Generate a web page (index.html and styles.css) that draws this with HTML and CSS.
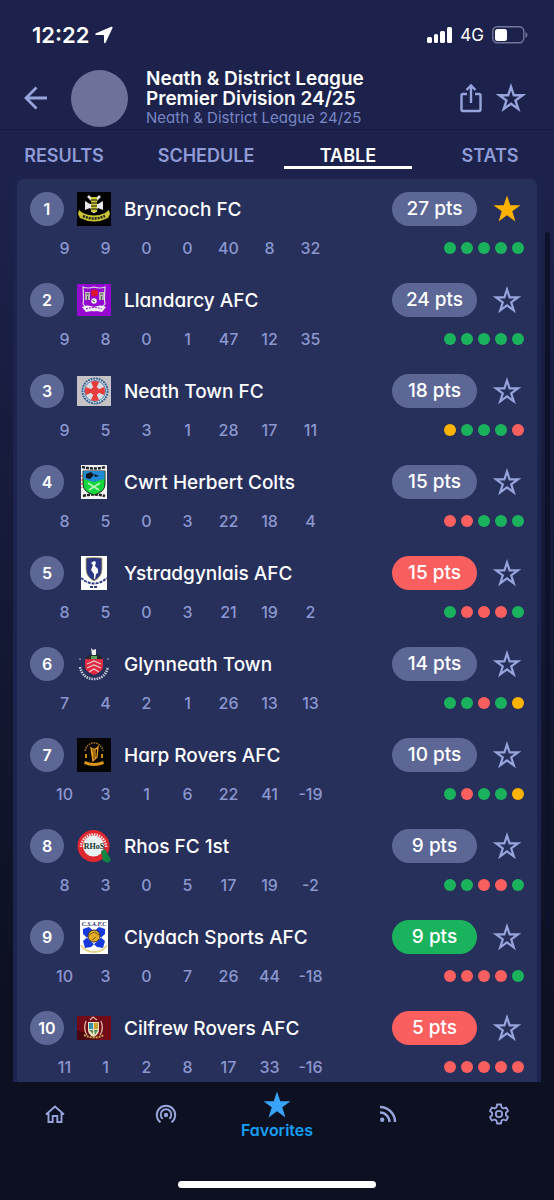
FILE: index.html
```html
<!DOCTYPE html>
<html lang="en">
<head>
  <meta charset="UTF-8">
  <meta name="viewport" content="width=device-width, initial-scale=1">
  <title>Neath &amp; District League - Table</title>
  <link rel="stylesheet" href="styles.css">
</head>
<body>
  <!-- shared icons -->
  <svg class="sprite" aria-hidden="true">
    <symbol id="star-line" viewBox="0 0 28 28">
      <path d="M14 3.500l2.600 7.900h8.300l-6.700 4.900 2.600 8-6.800-4.900-6.800 4.900 2.600-8-6.700-4.900h8.300z" fill="none" stroke="currentColor" stroke-width="2.200"/>
    </symbol>
    <symbol id="star-fill" viewBox="0 0 28 28">
      <path d="M14 .5l3.300 9.700h10.200l-8.200 6.100 3.100 10.200L14 20.300l-8.400 6.200 3.100-10.200L.5 10.200h10.200z" fill="currentColor"/>
    </symbol>
  </svg>

  <div class="app">
    <div class="status-bar">
      <span class="time">12:22</span>
      <svg class="location" width="18" height="18" viewBox="0 0 18 18"><path d="M16.200.8L1 7.300c-1.200.5-.9 1.700.3 1.700H8.300c.5 0 .7.200.7.700v6.600c0 1.200 1.200 1.500 1.700.3L17.500 2c.4-.9-.4-1.600-1.300-1.200z" fill="#fff"/></svg>
      <svg class="signal" width="25" height="16" viewBox="0 0 25 16" fill="#fff"><rect x="0" y="10" width="5" height="6" rx="1.500"/><rect x="7" y="7" width="4" height="9" rx="1.500"/><rect x="13" y="4" width="5" height="12" rx="1.500"/><rect x="20" y="0" width="5" height="16" rx="1.500"/></svg>
      <span class="network">4G</span>
      <svg width="36" height="18" viewBox="0 0 36 18"><rect x=".8" y=".8" width="31" height="16" rx="4.500" fill="none" stroke="#73779a" stroke-width="1.400"/><rect x="3" y="3" width="12" height="12" rx="2.500" fill="#fff"/><path d="M33.500 6v6q2-1 2-3t-2-3z" fill="#73779a"/></svg>
    </div>

    <header class="header">
      <button class="icon-btn back" aria-label="Back">
        <svg width="24" height="24" viewBox="0 0 24 24" fill="none" stroke="currentColor" stroke-width="2.800"><path d="M23 12H2M12.500 1.500L2 12l10.500 10.500"/></svg>
      </button>
      <div class="avatar"></div>
      <div class="heading">
        <h1>Neath &amp; District League Premier Division 24/25</h1>
        <p>Neath &amp; District League 24/25</p>
      </div>
      <button class="icon-btn" aria-label="Share">
        <svg width="24" height="30" viewBox="0 0 24 30" fill="none" stroke="currentColor" stroke-width="2.400"><path d="M8 11H4Q2.500 11 2.500 12.500v14Q2.500 28 4 28h16q1.500 0 1.500-1.500v-14Q21.500 11 20 11H16M12 20V3M7.500 7L12 2.500 16.500 7"/></svg>
      </button>
      <button class="icon-btn" aria-label="Add to favorites">
        <svg width="30" height="30"><use href="#star-line"/></svg>
      </button>
    </header>

    <nav class="tabs">
      <a href="#results">RESULTS</a>
      <a href="#schedule">SCHEDULE</a>
      <a href="#table" class="active">TABLE</a>
      <a href="#stats">STATS</a>
    </nav>

    <main class="content">
      <div class="panel">
        <div class="card">
          <table class="standings" id="standings"></table>
        </div>
      </div>
      <div class="scroll-thumb"></div>
    </main>

    <footer class="bottom">
      <nav class="bottom-nav">
        <a href="#home" aria-label="Home"><svg width="20" height="18" viewBox="0 0 20 18" fill="none" stroke="currentColor" stroke-width="1.900"><path d="M1 9.500l9-8 9 8M3.500 8v9h4.200v-6h4.600v6h4.200V8"/></svg></a>
        <a href="#live" aria-label="Live"><svg width="22" height="20" viewBox="0 0 22 20" fill="none" stroke="currentColor" stroke-width="1.900"><path d="M5.500 18.300a9.200 9.200 0 1 1 11 0M7.800 14.800a5.300 5.300 0 1 1 6.400 0"/><circle cx="11" cy="11" r="2.200" fill="currentColor" stroke="none"/></svg></a>
        <a href="#favorites" class="active"><svg width="28" height="28"><use href="#star-fill"/></svg><span>Favorites</span></a>
        <a href="#news" aria-label="News"><svg width="18" height="18" viewBox="0 0 18 18" fill="none" stroke="currentColor" stroke-width="2.400"><path d="M1 2a15 15 0 0 1 15 15M1 7.500A9.500 9.500 0 0 1 10.500 17"/><circle cx="3.200" cy="14.800" r="2.200" fill="currentColor" stroke="none"/></svg></a>
        <a href="#settings" aria-label="Settings"><svg width="22" height="22" viewBox="0 0 22 22" fill="none" stroke="currentColor" stroke-width="1.800" stroke-linejoin="round"><path d="M9 1.500h4l.5 2.900 1.900 1.100 2.700-1 2 3.400-2.200 1.900v2.400l2.200 1.900-2 3.400-2.700-1-1.900 1.100-.5 2.900H9l-.5-2.900-1.900-1.100-2.700 1-2-3.400 2.200-1.900V9.800L1.900 7.900l2-3.400 2.700 1 1.900-1.100z"/><circle cx="11" cy="11" r="3.200"/></svg></a>
      </nav>
      <div class="home-bar"></div>
    </footer>
  </div>

  <script src="script.js"></script>
</body>
</html>
```

FILE: styles.css
```css
* {
  box-sizing: border-box;
}
body {
  margin: 0;
  background: #0c1021;
  color: #fff;
  font-family: Inter, "Open Sans", sans-serif;
  font-feature-settings: "cv11";
}
button {
  font: inherit;
  border: none;
  background: none;
  padding: 0;
  cursor: pointer;
}
a {
  color: inherit;
  text-decoration: none;
}
svg {
  display: block;
}
.sprite {
  display: none;
}
.app {
  height: 100vh;
  display: flex;
  flex-direction: column;
  background: linear-gradient(#1c224b 0, #1c224b 180px, #0c1021 1000px);
}

/* Status bar */
.status-bar {
  display: flex;
  align-items: center;
  height: 70px;
  padding: 0 26px 0 32px;
}
.time {
  font-size: 22px;
  font-weight: 600;
}
.location {
  margin-left: 6px;
}
.signal {
  margin-left: auto;
}
.network {
  margin: 0 8px;
  font-size: 17px;
}

/* Header */
.header {
  display: flex;
  align-items: center;
  height: 60px;
  padding: 0 28px 3px 24px;
  border-bottom: 1px solid #181c40;
}
.icon-btn {
  color: #97a4dc;
}
.icon-btn + .icon-btn {
  margin-left: 13px;
}
.avatar {
  width: 57px;
  height: 57px;
  flex: none;
  margin: 0 18px 0 23px;
  border-radius: 50%;
  background: #6c7299;
}
.heading {
  width: 240px;
  margin-right: auto;
}
.heading h1 {
  margin: 0;
  font-size: 19px;
  line-height: 20px;
  font-weight: 600;
}
.heading p {
  margin: 0;
  color: #7986c4;
  font-size: 15px;
  line-height: 18px;
}

/* Tabs */
.tabs {
  display: flex;
  justify-content: space-between;
  flex: none;
  height: 49px;
  color: #8f9bd6;
  font-size: 18px;
  line-height: 24px;
  font-weight: 600;
}
.tabs a {
  width: 128px;
  height: 39px;
  padding-top: 14px;
  text-align: center;
}
.tabs .active {
  color: #fff;
  border-bottom: 3px solid #fff;
}

/* Standings */
.content {
  position: relative;
  flex: 1;
  min-height: 0;
  overflow: hidden;
  padding: 0 13px;
}
.panel {
  padding: 0 4px;
  background: #1d234f;
}
.card {
  border-radius: 7px 7px 0 0;
  background: #272f5b;
  padding: 0 13px;
}
.standings {
  width: 100%;
  table-layout: fixed;
  border-collapse: collapse;
}
.standings td {
  padding: 0;
}
.col-first {
  width: 55px;
}
.col-stat {
  width: 41px;
}
.team {
  display: flex;
  align-items: center;
  padding: 13px 3px 12px 0;
}
.rank {
  width: 34px;
  border-radius: 17px;
  background: #5c6796;
  font-size: 16px;
  line-height: 34px;
  font-weight: 600;
  text-align: center;
}
.crest {
  margin: 0 13px;
}
.name {
  font-size: 19px;
  font-weight: 500;
}
.points {
  width: 85px;
  margin-left: auto;
  border-radius: 17px;
  background: #5c6796;
  font-size: 19px;
  line-height: 34px;
  font-weight: 500;
  text-align: center;
}
.points.lost {
  background: #fa5f5f;
}
.points.won {
  background: #1bb25e;
}
.fav {
  margin-left: 16px;
  color: #97a4dc;
}
.fav.on {
  color: #fcb302;
}
.stats td {
  height: 32px;
  padding-bottom: 12px;
  color: #8b97cf;
  font-size: 16px;
  line-height: 20px;
  font-weight: 500;
  text-align: center;
}
.stats td:first-child {
  padding-left: 14px;
}
.form {
  display: flex;
  justify-content: flex-end;
  gap: 5px;
}
.form span {
  width: 12px;
  height: 12px;
  border-radius: 50%;
}
.form .w {
  background: #1bb25e;
}
.form .d {
  background: #fcb302;
}
.form .l {
  background: #fa5f5f;
}
.scroll-thumb {
  position: absolute;
  top: 53px;
  right: 4px;
  width: 5px;
  height: 696px;
  border-radius: 3px;
  background: #0d1129;
}

/* Bottom bar */
.bottom {
  flex: none;
  background: #0c1021;
}
.bottom-nav {
  display: grid;
  grid-template-columns: repeat(5, 1fr);
  height: 103px;
  color: #97a4dc;
}
.bottom-nav a {
  display: flex;
  flex-direction: column;
  align-items: center;
  justify-content: center;
  height: 64px;
}
.bottom-nav .active {
  justify-content: flex-start;
  padding-top: 9px;
  color: #39a3f8;
  font-size: 16px;
  line-height: 20px;
  font-weight: 600;
}
.bottom-nav .active span {
  margin-top: 1px;
  color: #16a0f5;
}
.home-bar {
  width: 198px;
  height: 7px;
  margin: -4px auto 12px;
  border-radius: 4px;
  background: #fff;
}
```

FILE: script.js
```js
// name, points, [played, won, drawn, lost, for, against, diff], last five, points colour
const teams = [
  ['Bryncoch FC', 27, [9, 9, 0, 0, 40, 8, 32], 'wwwww'],
  ['Llandarcy AFC', 24, [9, 8, 0, 1, 47, 12, 35], 'wwwww'],
  ['Neath Town FC', 18, [9, 5, 3, 1, 28, 17, 11], 'dwwwl'],
  ['Cwrt Herbert Colts', 15, [8, 5, 0, 3, 22, 18, 4], 'llwww'],
  ['Ystradgynlais AFC', 15, [8, 5, 0, 3, 21, 19, 2], 'wlllw', 'lost'],
  ['Glynneath Town', 14, [7, 4, 2, 1, 26, 13, 13], 'wwlwd'],
  ['Harp Rovers AFC', 10, [10, 3, 1, 6, 22, 41, -19], 'wlwwd'],
  ['Rhos FC 1st', 9, [8, 3, 0, 5, 17, 19, -2], 'wwllw'],
  ['Clydach Sports AFC', 9, [10, 3, 0, 7, 26, 44, -18], 'llllw', 'won'],
  ['Cilfrew Rovers AFC', 5, [11, 1, 2, 8, 17, 33, -16], 'lllll', 'lost']
];

// club badges, drawn on a 34x34 grid
const crests = [
  `<path d="M0 0h34v34H0z" fill="#000"/>
   <path d="M8 9l5 3h8l5-3v9l-5-2-3 5h-2l-3-5-5 2z" fill="#e8e8e8"/><path d="M11 4l4 4M23 4l-4 4" stroke="#e8e8e8" stroke-width="2.500"/>
   <path d="M14 5h6v15h-6z" fill="#cfc934"/><path d="M14 8h6M14 11h6M14 14h6M14 17h6" stroke="#111"/>
   <path d="M2 18l4 3q11 5 22 0l4-3 1 4-2 4q-14 7-28 0l-2-4z" fill="#c9c334"/><path d="M6 24q11 5 22 0" fill="none" stroke="#222" stroke-width="2.500" stroke-dasharray="2 1"/>`,
  `<path d="M0 1h34v32H0z" fill="#9408d2"/>
   <path d="M6 4q5 2 11 0 6 2 11 0-1 14 0 17-4 5-11 7-7-2-11-7 1-3 0-17z" fill="none" stroke="#ddd" stroke-width="1.200"/>
   <path d="M8 9h5v8H8zM22 9h5v8h-5z" fill="#b9b5b9"/><path d="M9 11h3M23 11h3M10.500 13v4M24.500 13v4" stroke="#555"/>
   <circle cx="17.500" cy="10" r="3.500" fill="#dd1430"/><circle cx="17" cy="18" r="2.800" fill="#eee"/><path d="M15.500 17l2 2" stroke="#222"/>
   <path d="M5 24q5-3 12 0 7-3 12 0l-4 5q-8-2-16 0z" fill="#eee"/><path d="M9 26q8-3 16 0" fill="none" stroke="#9408d2" stroke-dasharray="2 1"/>`,
  `<path d="M0 2h34v30H0z" fill="#c5c3c5"/>
   <circle cx="18" cy="17" r="12.500" fill="#e4e3e5" stroke="#3d6795" stroke-width="2" stroke-dasharray="2 .7"/><circle cx="18" cy="17" r="10.500" fill="#d8dce3" stroke="#517cab"/>
   <path d="M18 17l-4-9q4-2 8 0zM18 17l-4 9q4 2 8 0zM18 17l-9-4q-2 4 0 8zM18 17l9-4q2 4 0 8z" fill="#e83c3c"/><circle cx="18" cy="17" r="4" fill="#e83c3c"/>`,
  `<path d="M4 0h26v34H4z" fill="#f4f4f4"/>
   <path d="M5 2q12 3 24 0M6 31q11-3 22 0" fill="none" stroke="#222" stroke-width="2.500" stroke-dasharray="3 1"/>
   <path d="M6 6h22v13q0 8-11 11Q6 27 6 19z" fill="#12d63c" stroke="#222"/><path d="M6.500 6h21v8L17 17 6.500 14z" fill="#228bd2"/>
   <path d="M9 9l5-2 3 3-4 4-4-1zM17 9l5 2-4 1z" fill="#10151c"/><path d="M11 18l11 7M23 18l-11 7" stroke="#b8f5b8" stroke-width="1.500"/>
   <path d="M5 10v13" stroke="#c33" stroke-dasharray="2 2"/>`,
  `<path d="M4 0h26v34H4z" fill="#fff"/>
   <path d="M9 2q8-1 16 0v11q0 8-8 12-8-4-8-12z" fill="#2b3685" stroke="#bfa85c" stroke-width=".8"/>
   <path d="M14 7l3-2 2 1-1 4 3 3v4l-2 1-1 5h-1v-5l-3-4 2-5z" fill="#fff"/>
   <path d="M4 22l4 3q9 5 18 0l4-3M13 31h8" fill="none" stroke="#343c83" stroke-width="2" stroke-dasharray="3 1"/>`,
  `<path d="M3 20q3 12 14 12t14-12" fill="none" stroke="#c7c8d8" stroke-width="2.600" stroke-dasharray="1.500 1"/>
   <path d="M14 1l2 2 3-1v6h-4z" fill="#eee"/><path d="M9 12q0-4 5-4h6q5 0 5 4z" fill="#222a2c"/><path d="M14 9h6v3h-6z" fill="#59a35f"/>
   <path d="M8 12h18v7q0 6-9 9-9-3-9-9z" fill="#e12941"/><path d="M10 17l7-3 7 3M10 21l7-3 7 3M12 25l5-3 5 3" fill="none" stroke="#e8cbd0" stroke-width="1.200"/><path d="M2 12h2M30 12h2" stroke="#a9acc0"/>`,
  `<path d="M0 0h34v34H0z" fill="#050505"/>
   <path d="M8 13Q10 5 17 5t9 8" fill="none" stroke="#b27812" stroke-width="1.500" stroke-dasharray="1.500 1"/>
   <path d="M14 10q4 3 7-1l-1 10-4 4zM16 12v9M18 12v8" fill="none" stroke="#f3a51b" stroke-width="1.300"/>
   <path d="M8 23q9 4 18 0l1 3q-10 4-20 0z" fill="#dc9518"/><path d="M9 16v4M25 16v4" stroke="#c98713" stroke-width="2"/>`,
  `<circle cx="16.500" cy="17" r="16" fill="#df2730"/><path d="M4 18a12.500 12.500 0 0 1 25 0" fill="none" stroke="#f8dcdc" stroke-width="2.600" stroke-dasharray="1.500 1"/>
   <circle cx="16.500" cy="17" r="10.500" fill="#e9f2f2"/><path d="M24 22l4-2 6 11-3 3-5-2z" fill="#108443"/>
   <text x="17" y="20" text-anchor="middle" font-family="Liberation Serif, serif" font-size="8" font-weight="700" fill="#15322b">RHoS</text>`,
  `<path d="M3 0h28v34H3z" fill="#fff"/>
   <text x="17" y="6" text-anchor="middle" font-family="Liberation Serif, serif" font-size="6" font-weight="700" font-style="italic" fill="#222a70">C.S.A.F.C</text>
   <path d="M6 9l6-2 16 14-2 7-6-1L6 14zM28 9l-6-2L6 21l2 7 6-1 14-13z" fill="#1539dc"/>
   <circle cx="17" cy="16" r="6" fill="#e5ad27" stroke="#333"/><path d="M12 15l5-3 5 3M15 20l4-3" fill="none" stroke="#7d5a18"/>
   <path d="M4 25q4 7 13 7t13-7" fill="none" stroke="#e5d38b" stroke-width="1.800"/>`,
  `<path d="M0 5h34v24H0z" fill="#720a18"/><path d="M0 19l12 4 9 6H0z" fill="#4b0711"/>
   <path d="M11 11h11v9q-1 4-5.500 6Q12 24 11 20z" fill="#ede0bd"/><path d="M12 12h4v6h-4z" fill="#3291b5"/><path d="M17 12h4v6h-4z" fill="#cda22e"/><path d="M12 19h4v4zM17 19h4l-3 5z" fill="#548d5f"/>
   <path d="M13 9l3-3 4 3M9 10q-3 8 1 14M24 10q3 8-1 14" fill="none" stroke="#dcb8a0" stroke-width="1.300"/><path d="M7 24q10 5 20 0" fill="none" stroke="#c7a34d" stroke-width="2" stroke-dasharray="2 1"/>`
];

let html = '<colgroup><col class="col-first">' + '<col class="col-stat">'.repeat(6) + '<col></colgroup>';

teams.forEach(([name, points, stats, form, state], i) => {
  html += `
    <tbody>
      <tr>
        <td colspan="8">
          <div class="team">
            <span class="rank">${i + 1}</span>
            <svg class="crest" width="34" height="34" viewBox="0 0 34 34">${crests[i]}</svg>
            <span class="name">${name}</span>
            <span class="points ${state || ''}">${points} pts</span>
            <button class="fav ${i === 0 ? 'on' : ''}" aria-label="Favorite ${name}">
              <svg width="28" height="28"><use href="#star-${i === 0 ? 'fill' : 'line'}"/></svg>
            </button>
          </div>
        </td>
      </tr>
      <tr class="stats">
        ${stats.map(n => `<td>${n}</td>`).join('')}
        <td><div class="form">${[...form].map(r => `<span class="${r}"></span>`).join('')}</div></td>
      </tr>
    </tbody>`;
});

document.getElementById('standings').innerHTML = html;
```
